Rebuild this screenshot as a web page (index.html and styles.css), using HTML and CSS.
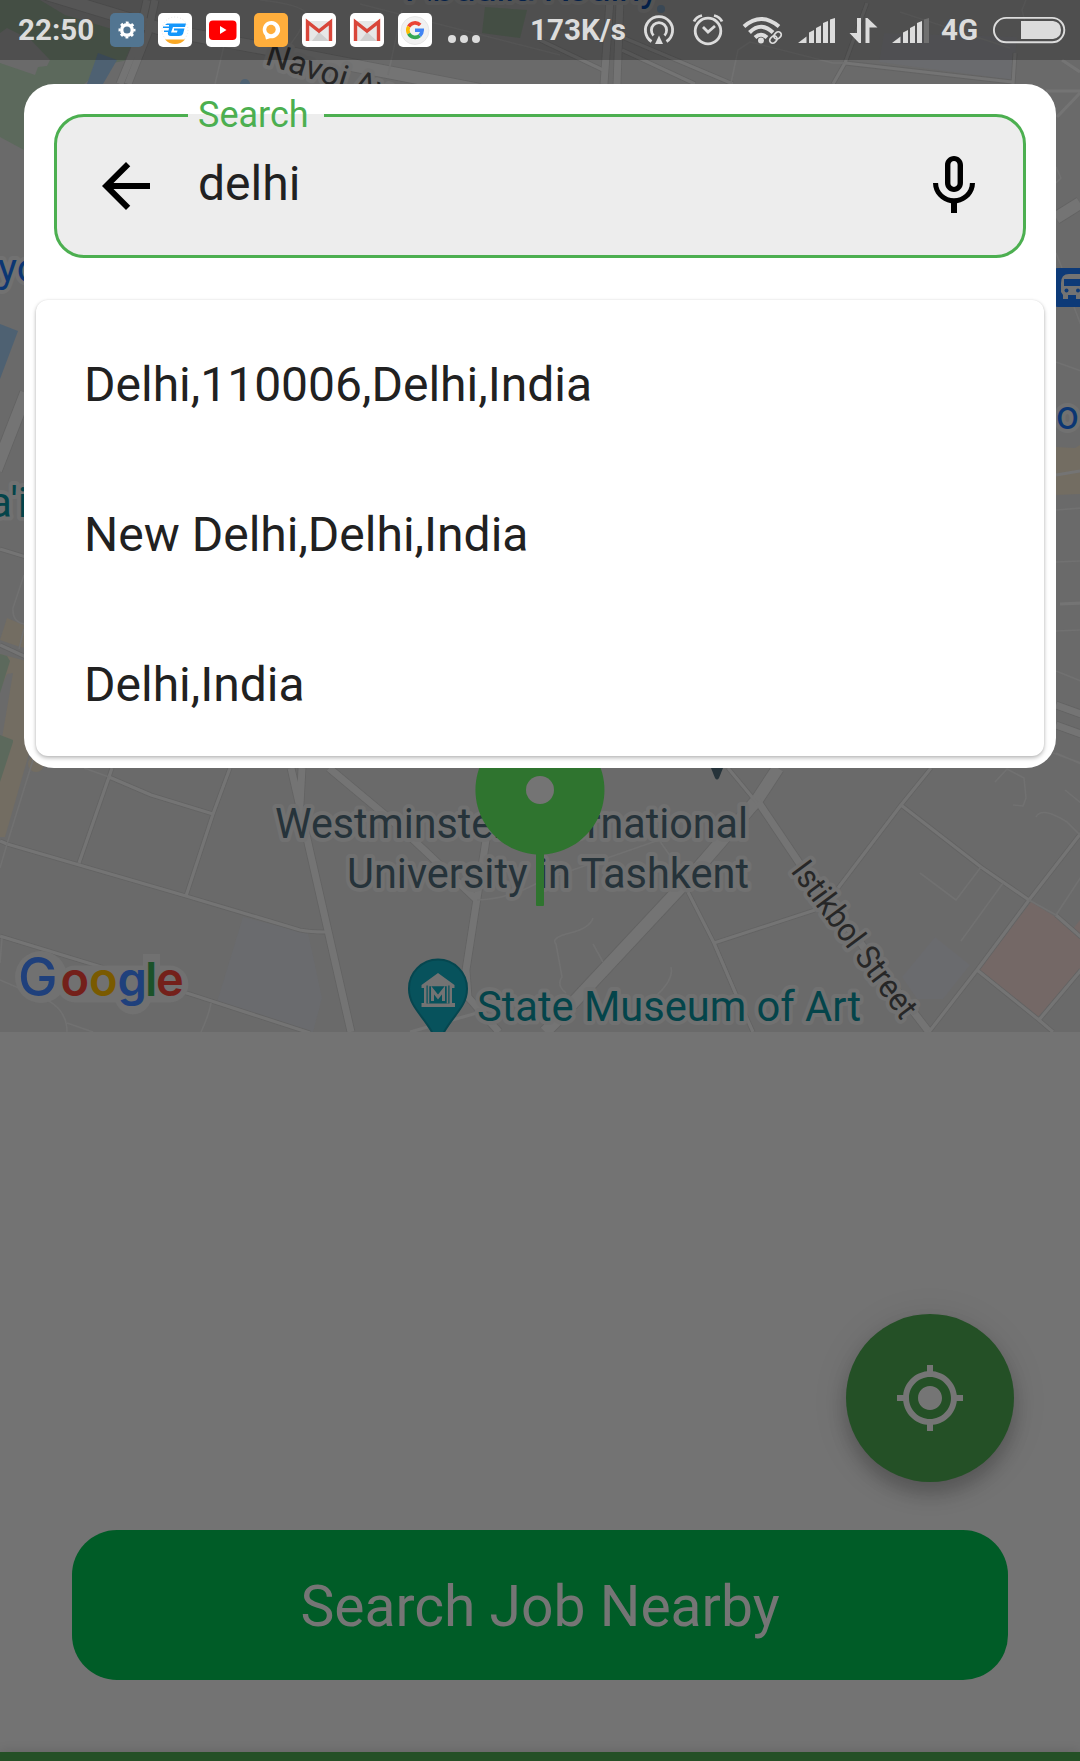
FILE: index.html
```html
<!DOCTYPE html>
<html lang="en">
<head>
<meta charset="utf-8">
<title>Search location</title>
<link rel="stylesheet" href="styles.css">
</head>
<body>
<div class="screen">
  <svg class="map" width="1080" height="1032" viewBox="0 0 1080 1032">
    <rect class="land" width="1080" height="1032"/>
    <g class="park">
      <path d="M0 0H40L65 15L142 38L128 60L108 64L84 84L24 150L0 137Z"/>
      <path d="M485 7L527 10L520 38L482 33Z"/>
    </g>
    <g class="land"><path d="M0 33L7 28L31 40L50 60L47 66L38 67L35 75L0 63Z"/></g>
    <g class="sand">
      <path d="M7 618L26 626V648L20 647L0 640Z"/>
      <path d="M0 654L30 662V750L5 837H0Z"/>
      <circle cx="36" cy="764" r="8"/>
      <path d="M1056 447L1075 448L1080 445V494L1056 495Z"/>
    </g>
    <g class="land"><path d="M7 674L13 673L2 738H0V690Z"/></g>
    <g class="park"><path d="M0 654L7 656L10 661L0 693ZM0 735L13 740V742L0 782Z"/></g>
    <g class="water">
      <path d="M98 53L117 60L103 84H87Z"/>
      <path d="M0 324L18 331L0 379Z"/>
      <circle cx="245" cy="84" r="5"/><circle cx="661" cy="9" r="4"/>
    </g>
    <g class="campus">
      <path d="M243 917L308 933L322 998L313 1032H306L217 1002Z"/>
      <path d="M935 937L970 965L943 999H917L902 977Z"/>
      <path d="M884 33L1017 37L1013 80L879 62Z"/>
    </g>
    <path class="clinic" d="M1031 902L1054 916L1081 940V968L1038 1017L979 970ZM1073 929L1080 920V935Z"/>

    <g class="edge">
      <path class="w13" d="M778 768L757 800L685 883L557 1020L545 1032M26 393L-4 470M40 -8L165 30L300 55L480 90"/>
      <path class="w13" d="M1056 218L1080 203"/>
      <path class="w8" d="M291 768L351 1032M302 768L300 805M329 768L403 830L477 900M486 840L466 970L468 997L499 1032M757 800L802 867L929 1032M155 0L148 33L128 84M147 0L138 40L120 84M610 0L604 84M620 0L617 84M1056 705L1081 714M1056 725L1081 734"/>
      <path class="w4" d="M0 841L7 844L186 896L300 930Q310 932 325 932M0 936L193 995L310 1033M112 768L109 777L79 863M109 777L151 795L213 814M230 768L213 814L186 896M728 768L757 803M931 768L901 805L838 888M901 805L981 867L1029 900M1056 915L1081 937M1081 833L1029 900L977 970L929 1032M977 970L1039 1020L1053 1032M1039 1020L1081 970M688 892L714 943L735 992L753 1032M714 943L815 910M540 40L603 70M622 50L695 84M622 37L733 84M845 63L1012 82M867 3L845 63L833 84M0 645L26 657M0 549L26 557M1015 53L1013 84"/>
    </g>
    <g class="road">
      <path class="w13" d="M778 768L757 800L685 883L557 1020L545 1032M26 393L-4 470M40 -8L165 30L300 55L480 90"/>
      <path class="w13" d="M1056 218L1080 203"/>
      <path class="w8" d="M291 768L351 1032M302 768L300 805M329 768L403 830L477 900M486 840L466 970L468 997L499 1032M757 800L802 867L929 1032M155 0L148 33L128 84M147 0L138 40L120 84M610 0L604 84M620 0L617 84M1056 705L1081 714M1056 725L1081 734"/>
      <path class="w4" d="M0 841L7 844L186 896L300 930Q310 932 325 932M0 936L193 995L310 1033M112 768L109 777L79 863M109 777L151 795L213 814M230 768L213 814L186 896M728 768L757 803M931 768L901 805L838 888M901 805L981 867L1029 900M1056 915L1081 937M1081 833L1029 900L977 970L929 1032M977 970L1039 1020L1053 1032M1039 1020L1081 970M688 892L714 943L735 992L753 1032M714 943L815 910M540 40L603 70M622 50L695 84M622 37L733 84M845 63L1012 82M867 3L845 63L833 84M0 645L26 657M0 549L26 557M1015 53L1013 84M1046 91H1080M1080 93L1057 117M1062 60L1080 72M1056 475L1080 471M1060 604L1081 603M410 1032L477 1013"/>
      <path class="w2" d="M33 760L7 844L0 868M84 768L109 777M2 938L0 963M0 980L35 995Q67 1005 67 1032M67 1023L93 1032M211 1003Q209 1015 201 1032M477 900Q510 899 541 881L659 840L678 867M593 918Q590 928 570 933T556 944L562 977Q556 985 566 993M593 944L603 962M671 967Q674 979 657 995M920 873L956 900L981 867M961 941L1003 883M995 782L1007 769L1024 778L1026 798L1023 806L1013 805M1036 817Q1042 806 1067 822L1080 835M1029 900L1056 915L1081 877M1053 753L1081 763M1065 790L1081 803M731 83L738 50L750 42L833 63H845M228 28L215 84M24 575L13 608Q12 622 24 624M24 629L19 649M1056 362L1081 371M1056 510L1081 508M1056 562L1081 561M1056 631L1081 630M1056 671L1081 681M1056 753L1081 764M1056 167L1061 178L1056 183M1056 253L1062 268M1074 307L1081 325M260 0Q305 5 307 15Q300 35 285 50M360 4L560 55M402 10L388 75M900 12L1010 48M1026 0L1022 10L1027 30"/>
    </g>

    <g class="label poi">
      <text x="275" y="838" textLength="473" lengthAdjust="spacingAndGlyphs">Westminster International</text>
      <text x="347" y="888" textLength="402" lengthAdjust="spacingAndGlyphs">University in Tashkent</text>
      <path d="M711 768H723L719 778Q717 781 715 778Z"/>
    </g>
    <g class="label museum">
      <text x="477" y="1021" textLength="384" lengthAdjust="spacingAndGlyphs">State Museum of Art</text>
      <text x="-11" y="517">a'i</text>
    </g>
    <g class="label transit">
      <text x="-2" y="282">yo</text>
      <text x="1056" y="429">o</text>
      <text class="dark" x="407" y="1" textLength="252">Abdulla Kodiriy</text>
    </g>
    <g class="label street">
      <text transform="translate(790 871) rotate(53.4)" textLength="187" lengthAdjust="spacingAndGlyphs">Istikbol Street</text>
      <text transform="translate(264 64) rotate(17.5)">Navoi Av</text>
    </g>

    <rect class="bus" x="1054" y="268" width="40" height="39" rx="4"/>
    <path class="bus-glyph" d="M1061 283Q1061 274 1069 274H1082V296H1080V299H1076V295H1068V299H1063V295L1061 292Z"/>
    <path class="bus" d="M1064 279H1082V286H1064Z"/><circle class="bus" cx="1066.500" cy="290.500" r="2"/><circle class="bus" cx="1078" cy="290.500" r="2"/>

    <path class="marker" d="M438 959.500A29 29 0 0 0 409 989C409 1007 424 1016 433 1034H443C452 1016 467 1007 467 989A29 29 0 0 0 438 959.500Z"/>
    <path class="marker-glyph" d="M438 973L454.500 985V988H452V1003H455V1007H421.500V1003H424V988H421.500V985Z"/>
    <path class="marker-cut" d="M426.500 985.500H449.500V1003.500H426.500Z"/>
    <path class="marker-line" d="M428.500 1003.500V985.500H447.500V1003.500"/>
    <path class="marker-m" d="M432.500 1001V990L438 997L443.500 990V1001"/>

    <g class="brand">
      <path class="halo" d="M75 984H170M133 990V996"/>
      <circle class="halo-dot" cx="41" cy="977" r="26"/>
      <rect class="halo-dot" x="143" y="954" width="17" height="30"/>
      <text><tspan class="cap b" x="18" y="996">G</tspan><tspan class="r" x="60.500" y="996">o</tspan><tspan class="y" x="89" y="996">o</tspan><tspan class="b" x="117.500" y="996">g</tspan><tspan class="g" x="145" y="996">l</tspan><tspan class="r" x="156" y="996">e</tspan></text>
    </g>

    <path class="pin" d="M540 725.500A64.500 64.500 0 1 1 539.900 725.500Z"/>
    <rect class="pin" x="536" y="850" width="8" height="56" rx="1"/>
    <circle class="pin-hole" cx="540" cy="790" r="14"/>
  </svg>

  <header class="status">
    <div class="left">
      <span class="time">22:50</span>
      <span class="app blue"><svg width="34" height="34" viewBox="0 0 34 34"><circle cx="17" cy="17" r="5.300" fill="none" stroke="#fff" stroke-width="3.400"/><circle cx="17" cy="17" r="7.500" fill="none" stroke="#fff" stroke-width="2" stroke-dasharray="2.900 2.990" stroke-dashoffset="1.450"/></svg></span>
      <span class="app"><svg width="34" height="34" viewBox="0 0 34 34"><circle cx="17" cy="17" r="13" fill="none" stroke="#ddd" stroke-width=".7" stroke-dasharray="1 2"/><path d="M7 26.500H27Q23 31 17 31T7 26.500Z" fill="#f9a825"/><path d="M9 10.500H28L27 14H15L13 19.500H19L19.500 17.500H16V15.500H26.500L25 21Q24 23 21 23H13Q9 23 10 19H6V17.500H10.500L11 15H5V13.500H11V12H7Z" fill="#1597fb"/></svg></span>
      <span class="app"><svg width="34" height="34" viewBox="0 0 34 34"><rect x="3" y="7.500" width="27.500" height="19.500" rx="4" fill="#f00"/><path d="M14 13L20.500 17L14 21Z" fill="#fff"/></svg></span>
      <span class="app orange"><svg width="34" height="34" viewBox="0 0 34 34"><path d="M12 26.500L11 22.500A8.700 8.700 0 1 1 16 25.200Z" fill="#fff"/><circle cx="17" cy="16.500" r="4.700" fill="#ffae3c"/></svg></span>
      <span class="app"><svg width="34" height="34" viewBox="0 0 34 34"><path d="M4 8H30V28H4Z" fill="#e7e7e7"/><path d="M17 19L27 28H10Z" fill="#cfcfcf"/><path d="M5.500 28V9L17 18L28.500 9V28" fill="none" stroke="#d9463a" stroke-width="3.400"/></svg></span>
      <span class="app"><svg width="34" height="34" viewBox="0 0 34 34"><path d="M4 8H30V28H4Z" fill="#e7e7e7"/><path d="M17 19L27 28H10Z" fill="#cfcfcf"/><path d="M5.500 28V9L17 18L28.500 9V28" fill="none" stroke="#d9463a" stroke-width="3.400"/></svg></span>
      <span class="app"><svg width="34" height="34" viewBox="0 0 34 34"><circle cx="17" cy="17.500" r="14" fill="#f1f1f1" stroke="#ddd" stroke-width=".6"/><g fill="none" stroke-width="3.600"><path d="M22.200 12A7.300 7.300 0 0 0 10.700 13.700" stroke="#ea4335"/><path d="M10.700 13.700A7.300 7.300 0 0 0 10.700 20.700" stroke="#fbbc05"/><path d="M10.700 20.700A7.300 7.300 0 0 0 21.800 22.600" stroke="#34a853"/><path d="M21.800 22.600A7.300 7.300 0 0 0 24.200 17.300H17" stroke="#4285f4"/></g></svg></span>
      <svg class="more" width="34" height="10" viewBox="447 34 34 10"><circle cx="452" cy="39" r="4"/><circle cx="464" cy="39" r="4"/><circle cx="476" cy="39" r="4"/></svg>
    </div>
    <div class="right">
      <span class="speed">173K/s</span>
      <svg class="signals" width="292" height="36" viewBox="640 12 292 36">
        <g fill="none" stroke="#dcdcdc" stroke-width="2.800">
          <path d="M651.500 41.500A13.600 13.600 0 1 1 666.500 41.500"/>
          <path d="M653.500 35.500A7.600 7.600 0 1 1 664.500 35.500"/>
          <circle cx="708" cy="31" r="12.800"/>
          <path d="M703 27L708 32L715 26M694 21.500Q696 17 702 15.500M722 21.500Q720 17 714 15.500"/>
          <path stroke-width="4" d="M744 26.500Q761 11.500 779 26.500M749.500 32.500Q761 21 773 32.500M755 37.500Q761 32 767 37.500"/>
          <g stroke-width="1.700"><rect x="-5.500" y="-3" width="8" height="6" rx="3" transform="translate(774.500 38.500) rotate(-45)"/><rect x="-2.500" y="-3" width="8" height="6" rx="3" transform="translate(776.500 36.500) rotate(-45)"/></g>
        </g>
        <g fill="#dcdcdc">
          <path d="M659 35.500L663 44H655Z"/><circle cx="761" cy="40.500" r="3"/>
          <path d="M798 43L806.500 36.500V43ZM809 32.500L814 30V43H809ZM816 28L821 25.500V43H816ZM823 23L828 21V43H823ZM830 19.500L835 18V43H830Z"/>
          <path d="M857 18H861V43H859L849.500 33H857ZM865.500 18H867.500L877.500 27.500H869.500V43H865.500Z"/>
          <path d="M892 43L900.500 36.500V43ZM903 32.500L908 30V43H903ZM910 28L915 25.500V43H910ZM917 23L922 21V43H917Z"/>
          <path fill="#707070" d="M924 19.500L929 18V43H924Z"/>
        </g>
      </svg>
      <span class="net">4G</span>
      <svg width="74" height="30" viewBox="992 15 74 30"><rect x="993.900" y="17.900" width="70.400" height="24.400" rx="12.200" fill="none" stroke="#dcdcdc" stroke-width="1.900"/><path d="M1021 21H1053Q1061 22 1061 30T1053 39H1021Z" fill="#dcdcdc"/></svg>
    </div>
  </header>

  <section class="dialog">
    <div class="field">
      <span class="legend">Search</span>
      <svg width="72" height="72" viewBox="0 0 24 24"><path d="M20 11H7.830l5.590-5.590L12 4l-8 8 8 8 1.410-1.410L7.830 13H20v-2z"/></svg>
      <span class="query">delhi</span>
      <svg width="72" height="72" viewBox="0 1 24 24"><path d="M12 15c1.660 0 2.990-1.340 2.990-3L15 6c0-1.660-1.340-3-3-3S9 4.340 9 6v6c0 1.660 1.340 3 3 3zm-1.200-9.100c0-.66.54-1.200 1.200-1.200.66 0 1.200.54 1.200 1.200l-.01 6.200c0 .66-.53 1.200-1.190 1.200s-1.200-.54-1.200-1.200V5.900zm6.500 6.100c0 3-2.540 5.100-5.300 5.100S6.700 15 6.700 12H5c0 3.410 2.720 6.230 6 6.720V22h2v-3.280c3.280-.48 6-3.300 6-6.720h-1.700z"/></svg>
    </div>
    <ul class="results">
      <li>Delhi,110006,Delhi,India</li>
      <li>New Delhi,Delhi,India</li>
      <li>Delhi,India</li>
    </ul>
  </section>

  <main class="actions">
    <button class="locate" aria-label="My location"><svg width="72" height="72" viewBox="0 0 24 24"><path d="M12 8c-2.210 0-4 1.790-4 4s1.790 4 4 4 4-1.790 4-4-1.790-4-4-4zm8.940 3c-.46-4.170-3.770-7.480-7.940-7.940V1h-2v2.060C6.830 3.520 3.520 6.830 3.060 11H1v2h2.060c.46 4.170 3.770 7.480 7.940 7.940V23h2v-2.060c4.170-.46 7.480-3.770 7.940-7.940H23v-2h-2.060zM12 19c-3.870 0-7-3.130-7-7s3.130-7 7-7 7 3.130 7 7-3.130 7-7 7z"/></svg></button>
    <button class="nearby">Search Job Nearby</button>
  </main>
  <footer class="bottom"></footer>
</div>
</body>
</html>
```
FILE: styles.css
```css
* { box-sizing: border-box; }
body { margin: 0; font-family: Roboto, sans-serif; background: #737373; }
button { border: 0; padding: 0; font-family: inherit; }

.screen { position: relative; width: 1080px; height: 1761px; overflow: hidden; display: flex; flex-direction: column; background: #737373; }

/* Map */
.map { display: block; flex: none; }
.land { fill: #6a6a6a; }
.park { fill: #5c695c; }
.sand { fill: #736d62; }
.water { fill: #4e6172; }
.campus { fill: #6a6b6e; }
.clinic { fill: #746866; }
.edge path, .road path { fill: none; stroke-linejoin: round; }
.edge { stroke: #636363; }
.road { stroke: #747474; }
.road .w13 { stroke-width: 12; }
.road .w8 { stroke-width: 7; }
.road .w4 { stroke-width: 3.2; }
.road .w2 { stroke-width: 1.6; stroke: #717171; }
.edge .w13 { stroke-width: 13.6; }
.edge .w8 { stroke-width: 8.6; }
.edge .w4 { stroke-width: 4.8; }
.label text { font-size: 42px; stroke: #717171; stroke-width: 8px; stroke-linejoin: round; paint-order: stroke; }
.poi { fill: #26333a; }
.museum { fill: #04444a; }
.transit { fill: #0b3673; }
.transit text { font-size: 40px; }
.transit .dark { fill: #062c62; }
.street { fill: #272727; }
.street text { font-size: 33px; }
.bus { fill: #0d3a78; }
.bus-glyph { fill: #737373; }
.marker { fill: #07525c; stroke: #06464f; stroke-width: 2; }
.marker-glyph { fill: #737373; }
.marker-cut { fill: #07525c; }
.marker-line { fill: none; stroke: #737373; stroke-width: 1.6; }
.marker-m { fill: none; stroke: #737373; stroke-width: 3; }
.brand text { font-family: Inter, sans-serif; font-size: 47px; font-weight: 600; }
.brand .cap { font-size: 53px; font-weight: 500; }
.brand .halo { fill: none; stroke: #717171; stroke-width: 37px; stroke-linejoin: round; stroke-linecap: round; }
.brand .halo-dot { fill: #717171; }
.brand .b { fill: #1f407c; }
.brand .r { fill: #74201a; }
.brand .y { fill: #7a5a00; }
.brand .g { fill: #1b5229; }
.pin { fill: #2f742f; }
.pin-hole { fill: #747474; }

/* System bar, drawn over the map */
.status { position: absolute; inset: 0 0 auto 0; height: 60px; padding: 0 14px 0 18px; display: flex; justify-content: space-between; align-items: center; background: rgba(0, 0, 0, .255); color: #dcdcdc; font-size: 29.6px; font-weight: 700; }
.left, .right { display: flex; align-items: center; }
.left { gap: 14px; }
.time { width: 78px; }
.app { width: 34px; height: 34px; border-radius: 5px; background: #fff; overflow: hidden; }
.app svg { display: block; }
.blue { background: #527591; }
.orange { background: #ffae3c; }
.more { fill: #dcdcdc; margin: 18px 0 0 1px; }
.speed { margin-right: 14px; }
.signals { margin-right: 9px; }
.net { width: 37px; margin-right: 14px; }

/* Search dialog, drawn over the map */
.dialog { position: absolute; top: 84px; left: 24px; width: 1032px; height: 684px; padding: 30px 12px 12px; border-radius: 30px; background: #fff; }
.field { position: relative; height: 144px; margin: 0 18px 42px; padding: 0 33px; display: flex; align-items: center; border: 3px solid #4caf50; border-radius: 30px; background: #ededed; }
.legend { position: absolute; left: 131px; top: -3px; width: 136px; height: 3px; padding-left: 10px; background: #ededed; color: #4caf50; font-size: 36px; line-height: 3px; white-space: nowrap; }
.query { flex: 1; padding: 0 0 4px 36px; color: #212121; font-size: 48px; line-height: 56px; }
.results { margin: 0; padding: 9px 0 0; height: 456px; list-style: none; border-radius: 12px; background: #fff; box-shadow: 0 2px 4px rgba(0, 0, 0, .28), 0 0 2px rgba(0, 0, 0, .08); }
.results li { height: 150px; padding: 0 48px; display: flex; align-items: center; color: #212121; font-size: 48px; }

/* Page actions */
.actions { flex: 1; padding: 282px 66px 72px; display: flex; flex-direction: column; align-items: flex-end; justify-content: space-between; }
.locate { width: 168px; height: 168px; border-radius: 50%; display: grid; place-items: center; background: #245026; box-shadow: 0 12px 18px rgba(0, 0, 0, .2), 0 4px 36px rgba(0, 0, 0, .1); }
.locate svg { fill: #757575; }
.nearby { align-self: center; width: 936px; height: 150px; padding-top: 2px; border-radius: 45px; background: #005c27; color: #757575; font-size: 57px; }
.bottom { flex: none; height: 9px; background: #245026; box-shadow: 0 0 12px rgba(0, 0, 0, .15); }
```
